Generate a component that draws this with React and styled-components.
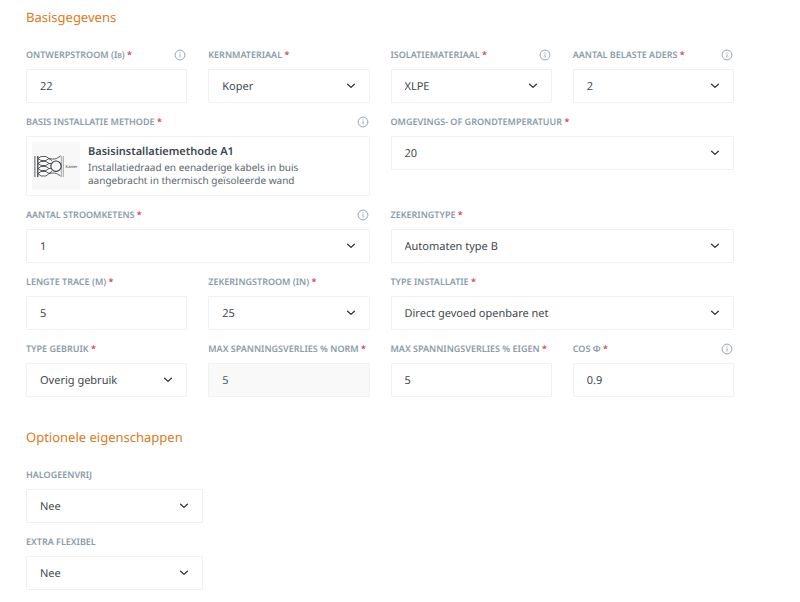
import React, { useId } from 'react';
import styled, { createGlobalStyle } from 'styled-components';

const GlobalStyle = createGlobalStyle`
  *, *::before, *::after {
    box-sizing: border-box;
  }

  body {
    margin: 0;
    background: #fff;
    color: #42484e;
    font-family: 'Noto Sans', sans-serif;
    font-size: 11px;
    text-rendering: geometricPrecision;
  }

  button, input, select {
    font: inherit;
    color: inherit;
    text-rendering: inherit;
  }
`;

const Form = styled.form`
  padding: 7px 66px 12px 26px;
`;

const Section = styled.section`
  & + & {
    margin-top: 30px;
  }
`;

const Heading = styled.h2`
  margin: 0 0 21px;
  font-size: 13px;
  font-weight: 400;
  line-height: 20px;
  color: #d97b1a;
`;

const FieldGrid = styled.div`
  display: grid;
  grid-template-columns: repeat(4, minmax(0, 1fr));
  gap: 12px 21px;
  align-items: start;
`;

const OptionList = styled.div`
  display: grid;
  gap: 12px;
  width: 25%;
`;

const FieldRoot = styled.div`
  display: grid;
  gap: 7px;
  min-width: 0;
  grid-column: span ${(p) => p.$span || 1};
`;

const LabelRow = styled.div`
  display: flex;
  align-items: center;
  justify-content: space-between;
  height: 14px;
`;

const Label = styled.label`
  font-size: 9px;
  font-weight: 600;
  line-height: 14px;
  white-space: nowrap;
  color: #8d9ba8;
`;

const Required = styled.span`
  color: #d9414f;
`;

const SmallCap = styled.span`
  font-size: 7px;
  line-height: 0;
`;

const InfoButton = styled.button`
  display: flex;
  margin: 0 1px 0 0;
  padding: 0;
  border: 0;
  background: none;
  color: #8d9ba8;
  cursor: pointer;
`;

const Input = styled.input`
  width: 100%;
  height: 34px;
  padding: 0 13px;
  border: 1px solid #f0f1f1;
  border-radius: 1px;
  background: #fff;

  &:disabled {
    background: #f9f9f9;
    color: #55595e;
  }
`;

const SelectBox = styled.div`
  display: grid;
  align-items: center;

  > * {
    grid-area: 1 / 1;
  }

  > svg {
    justify-self: end;
    margin-right: 14px;
    pointer-events: none;
  }
`;

const Select = styled.select`
  appearance: none;
  width: 100%;
  height: 34px;
  padding: 0 32px 0 13px;
  border: 1px solid #f0f1f1;
  border-radius: 1px;
  background: #fff;
`;

const MethodCard = styled.button`
  display: flex;
  align-items: center;
  gap: 8px;
  width: 100%;
  height: 60px;
  padding: 0 5px;
  border: 1px solid #f0f1f1;
  border-radius: 1px;
  background: #fff;
  text-align: left;
  cursor: pointer;
`;

const Thumb = styled.span`
  display: flex;
  flex: none;
  width: 48px;
  height: 48px;
  background: #f8f8f8;
`;

const MethodText = styled.span`
  display: grid;
  padding-bottom: 2px;
  font-size: 10px;
  line-height: 13px;
  color: #5c6670;
`;

const MethodTitle = styled.strong`
  font-size: 11px;
  font-weight: 600;
  line-height: 18px;
  color: #3d4852;
`;

const InfoIcon = () => (
  <svg width="12" height="12" viewBox="0 0 12 12" fill="none" stroke="currentColor" aria-hidden="true">
    <circle cx="6" cy="6" r="4.9" strokeWidth="0.9" />
    <path d="M6 5.3v3.1M6 3.4v1" strokeWidth="0.9" />
  </svg>
);

const Chevron = () => (
  <svg width="10" height="8" viewBox="0 0 10 8" fill="none" stroke="#30353a" strokeWidth="1.3" aria-hidden="true">
    <path d="M1.6 2.2 5 5.4l3.4-3.2" strokeLinecap="round" strokeLinejoin="round" />
  </svg>
);

// Doorsnede van een geisoleerde wand met de buis tegen de binnenzijde.
const MethodDrawing = () => (
  <svg width="48" height="48" viewBox="0 0 48 48" fill="none" stroke="#33373a" strokeWidth="0.8" aria-hidden="true">
    <path d="M2.9 14v21" />
    <path d="M5.8 14v21" strokeWidth="1.2" />
    <path d="M29.3 14v21M31.3 14v21" stroke="#8b8d8f" />
    <path d="M6 16.500l3-2h5l3 2 3.500.5h2l2-.5 4-2.500" />
    <path d="M6 16.500l3 2h5l3-2M17 16.500l3 2.200" />
    <path d="M6 21.500l3-2h5l3 2-3 2H9z" />
    <path d="M6 26.500l3-2h5l3 2-3 2H9z" />
    <path d="M6 31.500l3-2h5l3 2-3 2.500H9z" />
    <path d="M17 21.500h2M17 26.500h2M17 31.500l3-2.200" />
    <path d="M17 31.500l3.500-.5h2l2 .5 4 2.500" />
    <circle cx="24" cy="24.200" r="5.200" fill="#f8f8f8" strokeWidth="1.1" />
    <text x="33.500" y="26" fill="#33373a" stroke="none" fontFamily="Liberation Sans, sans-serif" fontSize="4">
      Kamer
    </text>
  </svg>
);

const Field = ({ id, label, span, required, info, children }) => (
  <FieldRoot $span={span}>
    <LabelRow>
      <Label htmlFor={id}>
        {label}
        {required ? <Required> *</Required> : null}
      </Label>
      {info ? (
        <InfoButton type="button" aria-label="Info">
          <InfoIcon />
        </InfoButton>
      ) : null}
    </LabelRow>
    {children}
  </FieldRoot>
);

const TextField = ({ value, disabled, ...field }) => {
  const id = useId();
  return (
    <Field id={id} {...field}>
      <Input id={id} type="text" defaultValue={value} disabled={disabled} />
    </Field>
  );
};

const SelectField = ({ value, ...field }) => {
  const id = useId();
  return (
    <Field id={id} {...field}>
      <SelectBox>
        <Select id={id} defaultValue={value}>
          <option value={value}>{value}</option>
        </Select>
        <Chevron />
      </SelectBox>
    </Field>
  );
};

const App = () => (
  <>
    <GlobalStyle />
    <Form>
      <Section>
        <Heading>Basisgegevens</Heading>
        <FieldGrid>
          <TextField label={<>ONTWERPSTROOM (I<SmallCap>B</SmallCap>)</>} value="22" required info />
          <SelectField label="KERNMATERIAAL" value="Koper" required />
          <SelectField label="ISOLATIEMATERIAAL" value="XLPE" required info />
          <SelectField label="AANTAL BELASTE ADERS" value="2" required info />

          <Field id="methode" label="BASIS INSTALLATIE METHODE" span={2} required info>
            <MethodCard id="methode" type="button">
              <Thumb>
                <MethodDrawing />
              </Thumb>
              <MethodText>
                <MethodTitle>Basisinstallatiemethode A1</MethodTitle>
                <span>Installatiedraad en eenaderige kabels in buis</span>
                <span>aangebracht in thermisch geïsoleerde wand</span>
              </MethodText>
            </MethodCard>
          </Field>
          <SelectField label="OMGEVINGS- OF GRONDTEMPERATUUR" value="20" span={2} required />

          <SelectField label="AANTAL STROOMKETENS" value="1" span={2} required info />
          <SelectField label="ZEKERINGTYPE" value="Automaten type B" span={2} required />

          <TextField label="LENGTE TRACE (M)" value="5" required />
          <SelectField label="ZEKERINGSTROOM (IN)" value="25" required />
          <SelectField label="TYPE INSTALLATIE" value="Direct gevoed openbare net" span={2} required />

          <SelectField label="TYPE GEBRUIK" value="Overig gebruik" required />
          <TextField label="MAX SPANNINGSVERLIES % NORM" value="5" required disabled />
          <TextField label="MAX SPANNINGSVERLIES % EIGEN" value="5" required />
          <TextField label="COS Φ" value="0.9" required info />
        </FieldGrid>
      </Section>

      <Section>
        <Heading>Optionele eigenschappen</Heading>
        <OptionList>
          <SelectField label="HALOGEENVRIJ" value="Nee" />
          <SelectField label="EXTRA FLEXIBEL" value="Nee" />
        </OptionList>
      </Section>
    </Form>
  </>
);

export default App;
